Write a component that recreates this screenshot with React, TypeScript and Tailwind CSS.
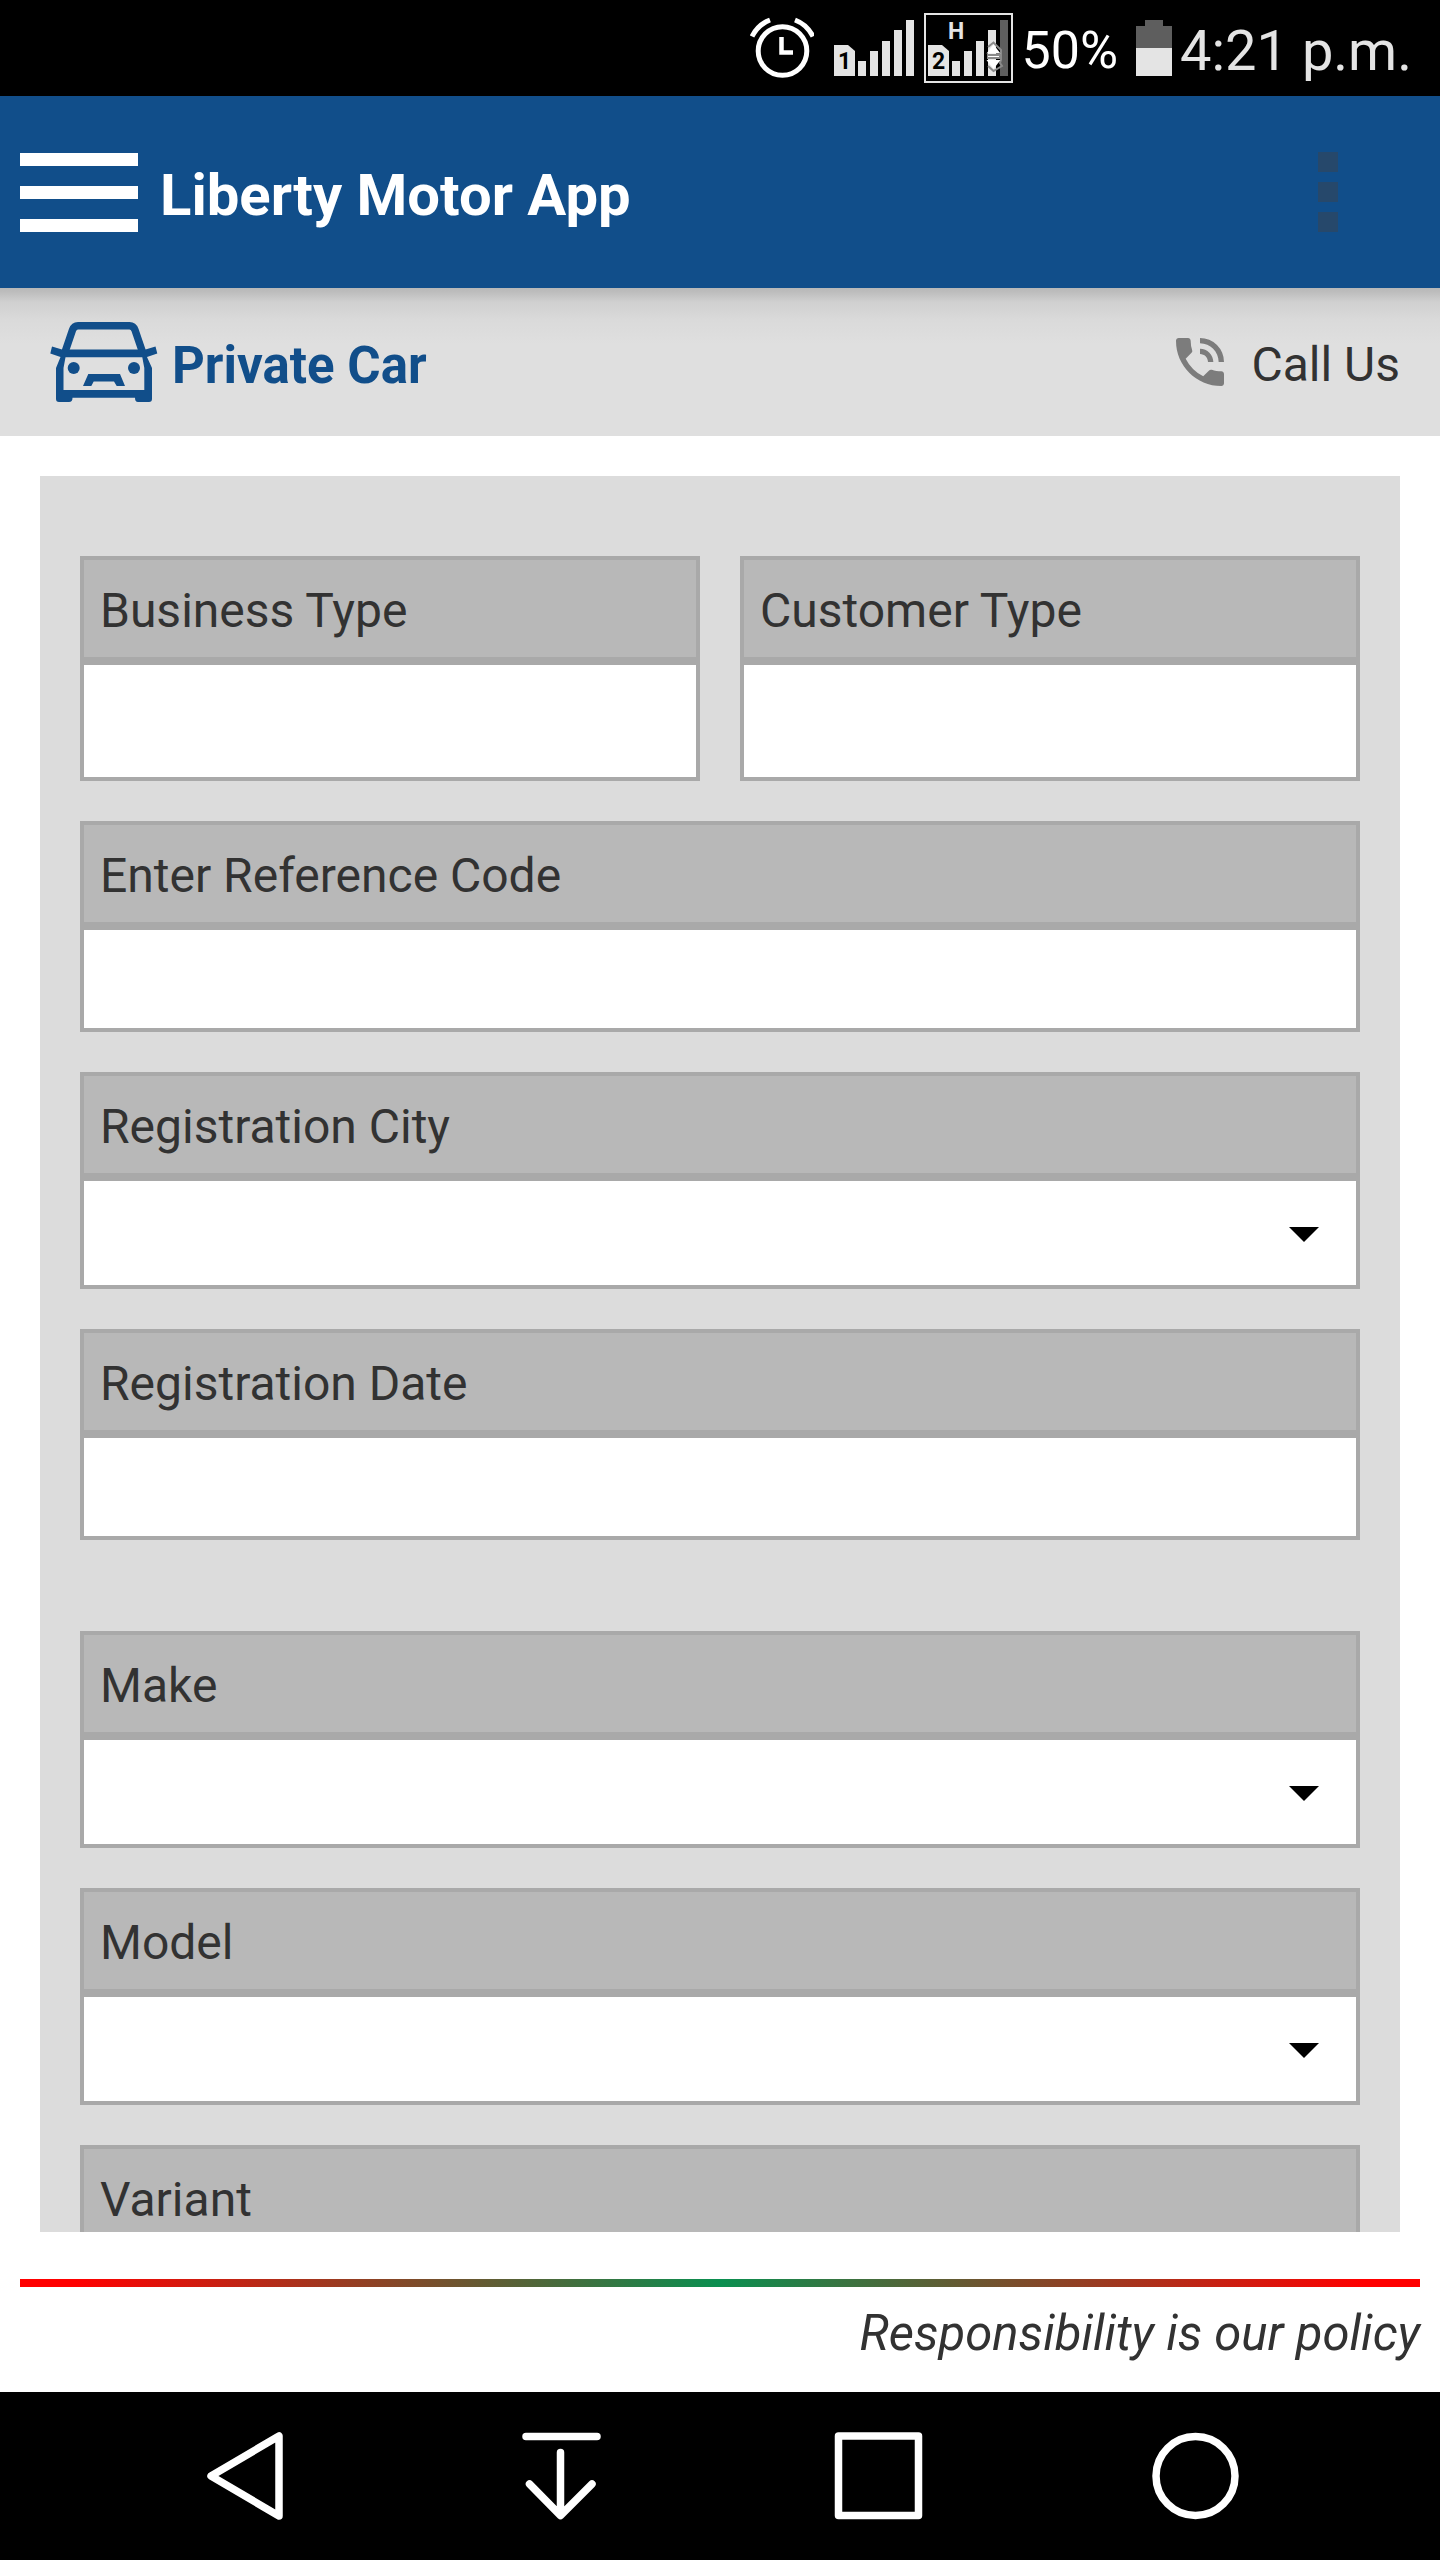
import { useId } from "react"
import { MdPhoneInTalk } from "react-icons/md"

const BAR_TOPS = [41, 31, 21, 10, 0]

function AlarmIcon() {
  return (
    <svg width="64" height="64" viewBox="0 0 64 64" fill="none" stroke="#fff" strokeWidth="5" aria-hidden="true">
      <circle cx="32.500" cy="35" r="24.300" />
      <path d="M2 20.500C6 12.500 12 7 20 4" />
      <path d="M63 20.500C59 12.500 53 7 45 4" />
      <path d="M31.500 21V36.500H43" strokeWidth="4.500" />
    </svg>
  )
}

function SignalBars({ sim, dimLast = false }: { sim: string; dimLast?: boolean }) {
  return (
    <g fill="#e4e4e4">
      <path d="M0 25H14L21 31V56H0Z" />
      <text x="10.500" y="49" fill="#000" fontSize="23" fontWeight="700" textAnchor="middle">
        {sim}
      </text>
      {BAR_TOPS.map((top, i) => (
        <rect key={top} x={24 + i * 12} y={top} width="8" height={56 - top} fill={dimLast && i === 4 ? "#5e5e5e" : "#e4e4e4"} />
      ))}
    </g>
  )
}

function StatusBar() {
  return (
    <div className="flex h-24 shrink-0 items-center justify-end bg-black pr-7">
      <AlarmIcon />
      <svg className="ml-5" width="80" height="56" viewBox="0 0 80 56" aria-hidden="true">
        <SignalBars sim="1" />
      </svg>
      <svg className="ml-[10px]" width="89" height="70" viewBox="0 0 89 70" aria-hidden="true">
        <rect x="1" y="1" width="87" height="68" fill="none" stroke="#e4e4e4" strokeWidth="2" />
        <g transform="translate(4 7)">
          <SignalBars sim="2" dimLast />
        </g>
        <text x="32" y="26" fill="#e4e4e4" fontSize="23" fontWeight="700" textAnchor="middle">
          H
        </text>
        {/* data activity arrows */}
        <path d="M64 34L69.500 29.500 77 37V47L76 50 78 53 69.500 58 64 53" fill="none" stroke="#8a8a8a" strokeWidth="2" />
        <path d="M63 41H76V46H63Z" fill="#8a8a8a" />
        <path d="M62.500 40.500L69.500 31.500 76.500 40.500Z" fill="#fff" />
        <path d="M62.500 47L69.500 56 76.500 47Z" fill="#fff" />
        <path d="M64 43.500H75" stroke="#fff" />
      </svg>
      <span className="ml-2 pt-1.5 text-[52px] leading-none text-white">50%</span>
      <svg className="ml-[18px]" width="36" height="56" viewBox="0 0 36 56" aria-hidden="true">
        <path d="M9 0H27V6H36V28H0V6H9Z" fill="#5e5e5e" />
        <path d="M0 28H36V56H0Z" fill="#e4e4e4" />
      </svg>
      <span className="ml-2 pt-1.5 text-[56px] leading-none text-[#e4e4e4]">4:21 p.m.</span>
    </div>
  )
}

function CarIcon() {
  return (
    <svg width="108" height="84" viewBox="0 0 108 84" fill="#114e8a" aria-hidden="true">
      <path d="M15 32L22.500 10Q24 5.700 28 5.700H79.500Q83.500 5.700 85 10L92.500 32" fill="none" stroke="#114e8a" strokeWidth="7.400" />
      <path d="M2 26.500L12 29.500H95.500L105.500 26.500 107.300 33.500 97 37 102 48V79Q102 82 99 82H88Q85 82 85 77.700H22.500Q22.500 82 19 82H9Q6 82 6 79V48L10.500 37 .3 33.500ZM15.500 37.300L13.500 48V70H94.300V48L92.300 37.300Z" fillRule="evenodd" />
      <circle cx="23.700" cy="48" r="6" />
      <circle cx="84" cy="48" r="6" />
      <path d="M38.300 54H70L75 66H66.700L64 61.500H43.700L41.300 66H33Z" />
    </svg>
  )
}

type FieldProps = {
  label: string
  kind?: "input" | "select"
  tall?: boolean
}

function Field({ label, kind = "input", tall = false }: FieldProps) {
  const id = useId()
  return (
    <div className="min-w-0">
      <label htmlFor={id} className="block border-4 border-[#a9a9a9] bg-[#b8b8b8] px-4 pt-5 pb-4 leading-[61px]">
        {label}
      </label>
      {kind === "select" ? (
        <div className="relative">
          <select id={id} className="block h-28 w-full appearance-none border-4 border-[#a9a9a9] bg-white px-4 outline-none">
            <option value=""></option>
          </select>
          <svg className="pointer-events-none absolute top-12 right-10" width="32" height="18" viewBox="0 0 32 18" aria-hidden="true">
            <path d="M1 2H31L16 17Z" />
          </svg>
        </div>
      ) : (
        <input
          id={id}
          type="text"
          className={`block w-full border-4 border-[#a9a9a9] bg-white px-4 outline-none ${tall ? "h-[120px]" : "h-[106px]"}`}
        />
      )}
    </div>
  )
}

function NavBar() {
  const items = [
    { name: "Back", shape: <path d="M14 48L82 8V88Z" /> },
    { name: "Notifications", shape: <path d="M12 8.500H83M46.500 24.500V87M15.500 56L46.500 87.500 78 56" /> },
    { name: "Recent apps", shape: <rect x="7.500" y="8" width="80" height="79.500" /> },
    { name: "Home", shape: <circle cx="47.500" cy="48" r="39.500" /> },
  ]
  return (
    <nav className="grid h-[168px] shrink-0 grid-cols-4 items-center justify-items-center bg-black px-[86px]">
      {items.map(({ name, shape }) => (
        <button key={name} type="button" aria-label={name}>
          <svg width="96" height="96" viewBox="0 0 96 96" fill="none" stroke="#fff" strokeWidth="7.500" strokeLinecap="round" strokeLinejoin="round">
            {shape}
          </svg>
        </button>
      ))}
    </nav>
  )
}

export default function App() {
  return (
    <div className="flex h-screen flex-col bg-white font-['Roboto',sans-serif] text-5xl text-[#323232]">
      <StatusBar />

      <header className="flex h-48 shrink-0 items-center bg-[#114e8a] pr-[102px] pl-5">
        <button type="button" aria-label="Open menu" className="flex w-[118px] flex-col gap-5">
          <span className="h-[13px] w-full bg-white" />
          <span className="h-[13px] w-full bg-white" />
          <span className="h-[13px] w-full bg-white" />
        </button>
        <h1 className="ml-[22px] pt-1.5 text-[58px] leading-none font-bold text-white">Liberty Motor App</h1>
        <button type="button" aria-label="More options" className="ml-auto flex flex-col gap-[10px]">
          <span className="size-5 bg-[#26486b]" />
          <span className="size-5 bg-[#26486b]" />
          <span className="size-5 bg-[#26486b]" />
        </button>
      </header>

      <div className="flex h-[148px] shrink-0 items-center justify-between bg-[linear-gradient(#b8b8b8,#bdbdbd_4px,#d0d0d0_14px,#dadada_32px,#dfdfdf_56px)] pr-10 pl-[50px]">
        <h2 className="flex items-center gap-[14px] text-[51px] leading-none font-bold text-[#114e8a]">
          <CarIcon />
          <span className="pt-1.5">Private Car</span>
        </h2>
        <a href="tel:" className="flex items-center gap-5 leading-none">
          <MdPhoneInTalk size={64} color="#7c7c7c" />
          <span className="pt-1.5">Call Us</span>
        </a>
      </div>

      <main className="flex min-h-0 flex-1 flex-col px-10 pt-10">
        <form className="min-h-0 flex-1 space-y-10 overflow-y-auto bg-[#dcdcdc] px-10 py-20 [scrollbar-width:none]">
          <div className="grid grid-cols-2 gap-10">
            <Field label="Business Type" tall />
            <Field label="Customer Type" tall />
          </div>
          <Field label="Enter Reference Code" />
          <Field label="Registration City" kind="select" />
          <Field label="Registration Date" />
          {/* Vehicle */}
          <div className="space-y-10 pt-[51px]">
            <Field label="Make" kind="select" />
            <Field label="Model" kind="select" />
            <Field label="Variant" kind="select" />
          </div>
        </form>
      </main>

      <footer className="h-40 shrink-0 px-5 pt-[47px]">
        <div className="h-2 bg-[linear-gradient(to_right,#ff0000_4%,#0a8f50_50%,#ff0000_96%)]" />
        <p className="mt-4 text-right text-[49px] leading-[62px] italic">Responsibility is our policy</p>
      </footer>

      <NavBar />
    </div>
  )
}
